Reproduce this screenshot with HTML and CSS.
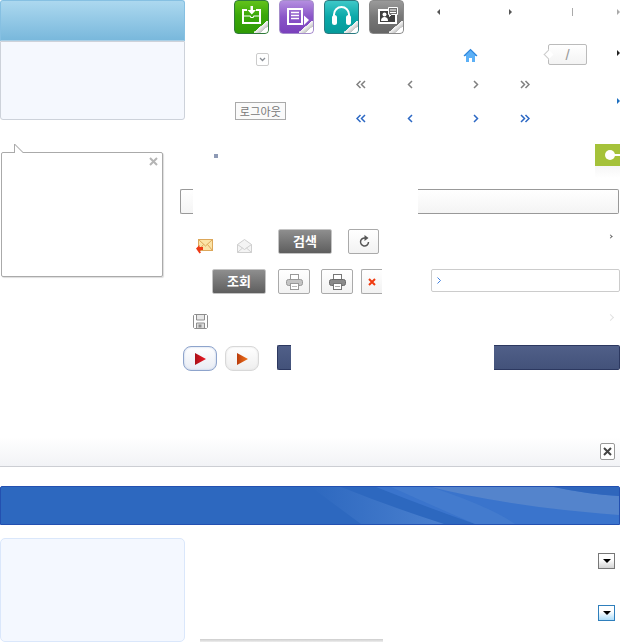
FILE: index.html
```html
<!DOCTYPE html>
<html lang="ko">
<head>
    <meta charset="UTF-8">
    <title>Sprite</title>
    <link rel="stylesheet" href="styles.css">
</head>
<body>
<div id="sheet">
    <div class="panel-head"></div>
    <div class="panel-body"></div>

    <!-- app icons -->
    <div class="app app-green">
        <svg width="27" height="24" viewBox="0 0 27 24"><path d="M9 5H5v13h17V5h-4" fill="none" stroke="#fff" stroke-width="2"/><path d="M5 11h7l1 1.500h2l1-1.500h6" fill="none" stroke="#fff" stroke-width="1.200"/><path d="M12.500 1h2.500v4h3l-4.200 4.500L9.500 5h3z" fill="#fff"/></svg>
        <i class="curl"></i>
    </div>
    <div class="app app-purple">
        <svg width="27" height="26" viewBox="0 0 27 26"><path d="M5 4h14v15H5z" fill="none" stroke="#fff" stroke-width="2"/><path d="M8 7.500h8M8 10.500h8M8 13.500h8" stroke="#fff" stroke-width="1.400"/><path d="M21 10.500l5 4.500-5 5z" fill="#fff"/></svg>
        <i class="curl"></i>
    </div>
    <div class="app app-teal">
        <svg width="27" height="26" viewBox="0 0 27 26"><path d="M6 11V9.500a7.500 7.500 0 0 1 15 0V11" fill="none" stroke="#fff" stroke-width="2"/><rect x="4" y="10" width="5" height="10" rx="2.500" fill="#fff"/><rect x="18" y="10" width="5" height="10" rx="2.500" fill="#fff"/></svg>
        <i class="curl"></i>
    </div>
    <div class="app app-gray">
        <svg width="29" height="26" viewBox="0 0 29 26"><rect x="6" y="4" width="19" height="15" fill="#fff"/><rect x="8" y="6" width="15" height="11" fill="#3f3f3f"/><circle cx="12.500" cy="9.500" r="2" fill="#fff"/><path d="M9 16c0-3 1.500-4 3.500-4s3.500 1 3.500 4z" fill="#fff"/><path d="M16.500 2.500h9v7h-6l-2 2v-2h-1z" fill="#707070" stroke="#fff"/><path d="M18 5h6M18 7.500h6" stroke="#fff"/></svg>
        <i class="curl"></i>
    </div>

    <i class="tri tri-l t1"></i>
    <i class="tri tri-r t2"></i>
    <i class="divider"></i>
    <i class="tri tri-r t3"></i>

    <div class="select-arrow">
        <svg width="7" height="5" viewBox="0 0 7 5"><path d="M1 1l2.500 2.500L6 1" fill="none" stroke="#8a8f96" stroke-width="1.300"/></svg>
    </div>
    <div class="btn-logout">로그아웃</div>

    <svg class="home" width="15" height="15" viewBox="0 0 15 15"><path d="M7.500 1.500L1 8h2v6h3v-4h3v4h3V8h2z" fill="#5cb0f6"/><path d="M1 8l6.500-6.500L14 8" fill="none" stroke="#2f86dc" stroke-width="1.200"/></svg>

    <div class="page-tip"><span class="tip-tail"></span><span class="tip-text">/</span></div>
    <i class="tri tri-r t4"></i>
    <i class="tri tri-r t5"></i>

    <!-- pager -->
    <svg class="pg pg-a1" width="10" height="9" viewBox="0 0 10 9"><path d="M4.500 1L1 4.500 4.500 8M9 1L5.500 4.500 9 8" fill="none" stroke="#808080" stroke-width="1.500"/></svg>
    <svg class="pg pg-a2" width="6" height="9" viewBox="0 0 6 9"><path d="M5 1L1.500 4.500 5 8" fill="none" stroke="#808080" stroke-width="1.500"/></svg>
    <svg class="pg pg-a3" width="6" height="9" viewBox="0 0 6 9"><path d="M1 1l3.500 3.500L1 8" fill="none" stroke="#808080" stroke-width="1.500"/></svg>
    <svg class="pg pg-a4" width="10" height="9" viewBox="0 0 10 9"><path d="M1 1l3.500 3.500L1 8M5.500 1L9 4.500 5.500 8" fill="none" stroke="#808080" stroke-width="1.500"/></svg>
    <svg class="pg pg-b1" width="10" height="9" viewBox="0 0 10 9"><path d="M4.500 1L1 4.500 4.500 8M9 1L5.500 4.500 9 8" fill="none" stroke="#2c68c4" stroke-width="1.500"/></svg>
    <svg class="pg pg-b2" width="6" height="9" viewBox="0 0 6 9"><path d="M5 1L1.500 4.500 5 8" fill="none" stroke="#2c68c4" stroke-width="1.500"/></svg>
    <svg class="pg pg-b3" width="6" height="9" viewBox="0 0 6 9"><path d="M1 1l3.500 3.500L1 8" fill="none" stroke="#2c68c4" stroke-width="1.500"/></svg>
    <svg class="pg pg-b4" width="10" height="9" viewBox="0 0 10 9"><path d="M1 1l3.500 3.500L1 8M5.500 1L9 4.500 5.500 8" fill="none" stroke="#2c68c4" stroke-width="1.500"/></svg>

    <!-- balloon -->
    <div class="balloon">
        <span class="balloon-tail"></span>
        <svg class="balloon-close" width="9" height="9" viewBox="0 0 9 9"><path d="M1 1l7 7M8 1L1 8" stroke="#b5b5b5" stroke-width="2"/></svg>
    </div>

    <i class="bullet"></i>

    <div class="tab-green"><i class="tab-dot"></i><i class="tab-line"></i></div>
    <div class="tab-shadow"></div>

    <div class="input-l"></div>
    <div class="input-r"></div>

    <!-- mail -->
    <svg class="mail-new" width="18" height="16" viewBox="0 0 18 16"><rect x="2.500" y="1.500" width="14" height="11" fill="#fbe3a6" stroke="#dca75a"/><path d="M2.500 1.500L9.500 8l7-6.500M2.500 12.500L7.500 6.500M16.500 12.500l-5-6" fill="none" stroke="#dca75a"/><path d="M0 10.500L3.500 7v2h3.500v3H5l-1 1 1 1.500-1.500 1z" fill="#ee3a16"/></svg>
    <svg class="mail-open" width="15" height="14" viewBox="0 0 15 14"><path d="M.5 5.500L7.500.5l7 5v8H.5z" fill="#f4f4f4" stroke="#cfcfcf"/><path d="M.5 5.500l7 5 7-5M.5 13.500l5-4.500M14.500 13.500l-5-4.500" fill="none" stroke="#cfcfcf"/></svg>

    <div class="btn-dark btn-search">검색</div>
    <div class="btn-light btn-refresh">
        <svg width="12" height="13" viewBox="0 0 12 13"><path d="M8.500 3.500a4 4 0 1 0 2 3.500" fill="none" stroke="#555" stroke-width="1.500"/><path d="M6.500 0v6l4-3z" fill="#555"/></svg>
    </div>
    <i class="chev-small"></i>

    <div class="btn-dark btn-view">조회</div>
    <div class="btn-light btn-print1">
        <svg width="17" height="16" viewBox="0 0 17 16"><rect x="4.500" y=".5" width="8" height="5" fill="#fff" stroke="#999"/><rect x=".5" y="5.500" width="16" height="6" rx="2" fill="#c4c4c4" stroke="#999"/><rect x="4.500" y="9.500" width="8" height="6" fill="#fff" stroke="#999"/><path d="M6 12.500h5" stroke="#bbb"/></svg>
    </div>
    <div class="btn-light btn-print2">
        <svg width="17" height="16" viewBox="0 0 17 16"><rect x="4.500" y=".5" width="8" height="5" fill="#fff" stroke="#777"/><rect x=".5" y="5.500" width="16" height="6" rx="2" fill="#8a8a8a" stroke="#6a6a6a"/><rect x="4.500" y="9.500" width="8" height="6" fill="#fff" stroke="#777"/><path d="M6 12.500h5" stroke="#aaa"/></svg>
    </div>
    <div class="btn-light btn-del">
        <svg width="8" height="8" viewBox="0 0 8 8"><path d="M1 1l6 6M7 1L1 7" stroke="#f03a10" stroke-width="2"/></svg>
    </div>
    <div class="link-box">
        <svg width="4" height="7" viewBox="0 0 4 7"><path d="M.5.500l3 3-3 3" fill="none" stroke="#3d7fe0"/></svg>
    </div>

    <svg class="save" width="15" height="15" viewBox="0 0 15 15"><path d="M1.500.5h12l1 1v12l-1 1h-12l-1-1v-12z" fill="#fff" stroke="#8e8e8e"/><path d="M3.500 1v5h8V1" fill="#e8e8e8" stroke="#8e8e8e"/><path d="M3.500 14v-5h8v5" fill="#ddd" stroke="#8e8e8e"/><path d="M5.500 10.500h3v3h-3z" fill="#8e8e8e"/></svg>
    <i class="chev-faint"></i>

    <!-- play -->
    <div class="play play-on"><svg width="11" height="12" viewBox="0 0 11 12"><defs><linearGradient id="pr" x1="0" x2="1"><stop offset="0" stop-color="#a91018"/><stop offset="1" stop-color="#ee1a24"/></linearGradient></defs><path d="M0 0l11 6L0 12z" fill="url(#pr)"/></svg></div>
    <div class="play play-off"><svg width="11" height="12" viewBox="0 0 11 12"><defs><linearGradient id="po" x1="0" x2="1"><stop offset="0" stop-color="#b93c0c"/><stop offset="1" stop-color="#f2741a"/></linearGradient></defs><path d="M0 0l11 6L0 12z" fill="url(#po)"/></svg></div>

    <div class="navy-l"></div>
    <div class="navy-r"></div>

    <div class="close-bar"></div>
    <div class="btn-close">
        <svg width="9" height="9" viewBox="0 0 9 9"><path d="M1 1l7 7M8 1L1 8" stroke="#444" stroke-width="2"/></svg>
    </div>

    <div class="blue-bar">
        <svg width="618" height="37" viewBox="0 0 618 37">
            <defs><linearGradient id="wave" x1="0" x2="1"><stop offset="0" stop-color="#2d68bf"/><stop offset="1" stop-color="#4a80cf"/></linearGradient></defs>
            <path d="M310 0h30q50 20 103 37H360z" fill="url(#wave)"/>
            <path d="M375 0h243v37H474Q425 20 375 0z" fill="#3a74cc"/>
            <path d="M390 0h40q60 20 84 37h-40Q430 18 390 0z" fill="#4a80cf" opacity=".6"/>
            <path d="M430 0h123q32 7 65 9v19Q510 20 430 0z" fill="#5484cc"/>
            <path d="M553 0h65v9q-33-2-65-9z" fill="#2f66bc"/>
        </svg>
    </div>

    <div class="panel-low"></div>

    <div class="drop drop-gray"><i class="drop-tri"></i></div>
    <div class="drop drop-blue"><i class="drop-tri"></i></div>

    <div class="strip"></div>
</div>
</body>
</html>
```

FILE: styles.css
```css
*{
    margin:0;
    padding:0;
    box-sizing:border-box;
}
html,body{
    background:#fff;
    overflow:hidden;
}
/* sprite sheet: every piece has its own place on the canvas */
#sheet{
    position:relative;
    width:620px;
    height:642px;
    font-family:"Noto Sans CJK KR","Liberation Sans",sans-serif;
    overflow:hidden;
}
#sheet > *{
    position:absolute;
}
i{
    display:block;
}

.panel-head{
    left:0;
    top:0;
    width:185px;
    height:41px;
    background:linear-gradient(#acd8ef,#79b8dc);
    border:1px solid #86c0e2;
    border-bottom:1px solid #a9cfe6;
    border-radius:3px 3px 0 0;
}
.panel-body{
    left:0;
    top:41px;
    width:185px;
    height:79px;
    background:#f5f8fe;
    border:1px solid #cdd2da;
    border-radius:0 0 3px 3px;
}

.app{
    top:0;
    width:35px;
    height:34px;
    border-radius:4px;
    display:flex;
    justify-content:center;
    padding-top:4px;
    overflow:hidden;
}
.app svg{
    flex:none;
}
.app-green{
    left:234px;
    background:linear-gradient(#62c21a 0,#3aa80a 45%,#2f9a04 100%);
    border:1px solid #2f7a3a;
}
.app-purple{
    left:279px;
    background:linear-gradient(#b48ee0 0,#8a55c8 50%,#7a40bc 100%);
    border:1px solid #a48ccb;
}
.app-teal{
    left:324px;
    background:linear-gradient(#3ec8c8 0,#0aa8a8 50%,#059a9a 100%);
    border:1px solid #2a7a80;
}
.app-gray{
    left:369px;
    background:linear-gradient(#9a9a9a 0,#777 50%,#666 100%);
    border:1px solid #8a8a8a;
}
.curl{
    position:absolute;
    right:-1px;
    bottom:-1px;
    width:15px;
    height:13px;
    background:linear-gradient(140deg,transparent 42%,#f6f6f6 43%,#c4c4c4 66%,#fff 67%);
}

.tri{
    width:0;
    height:0;
    border-style:solid;
}
.tri-l{
    border-width:3px 3px 3px 0;
    border-color:transparent #555 transparent transparent;
}
.tri-r{
    border-width:3px 0 3px 3px;
    border-color:transparent transparent transparent #555;
}
.t1{
    left:437px;
    top:9px;
}
.t2{
    left:509px;
    top:9px;
}
.t3{
    left:617px;
    top:9px;
    border-left-color:#aaa;
}
.t4{
    left:617px;
    top:50px;
    border-left-color:#222;
}
.t5{
    left:617px;
    top:98px;
    border-left-color:#1d6fc0;
}
.divider{
    left:572px;
    top:8px;
    width:1px;
    height:8px;
    background:#aaa;
}

.select-arrow{
    left:256px;
    top:53px;
    width:13px;
    height:13px;
    border:1px solid #ccc;
    border-radius:2px;
    display:flex;
    align-items:center;
    justify-content:center;
}
.btn-logout{
    left:235px;
    top:102px;
    width:51px;
    height:18px;
    border:1px solid #aaa;
    background:#fafafa;
    color:#777;
    font-size:11px;
    letter-spacing:.2px;
    line-height:16px;
    text-align:center;
}
.home{
    left:463px;
    top:48px;
}

.page-tip{
    left:548px;
    top:44px;
    width:39px;
    height:21px;
    border:1px solid #bbb;
    border-radius:2px;
    background:linear-gradient(#fff,#f3f3f3);
    display:flex;
    align-items:center;
    justify-content:center;
}
.tip-tail{
    position:absolute;
    left:-4px;
    top:6px;
    width:7px;
    height:7px;
    background:#fff;
    border-left:1px solid #ccc;
    border-bottom:1px solid #ccc;
    transform:rotate(45deg);
}
.tip-text{
    font-family:"Liberation Sans",sans-serif;
    font-size:15px;
    color:#999;
}

.pg-a1,.pg-a2,.pg-a3,.pg-a4{
    top:80px;
}
.pg-b1,.pg-b2,.pg-b3,.pg-b4{
    top:114px;
}
.pg-a1,.pg-b1{
    left:356px;
}
.pg-a2,.pg-b2{
    left:407px;
}
.pg-a3,.pg-b3{
    left:473px;
}
.pg-a4,.pg-b4{
    left:520px;
}

.balloon{
    left:1px;
    top:152px;
    width:162px;
    height:125px;
    background:#fff;
    border:1px solid #aaa;
    border-radius:2px;
    box-shadow:1px 1px 1px #ddd;
}
.balloon-tail{
    position:absolute;
    left:12px;
    top:-9px;
    width:9px;
    height:9px;
    background:linear-gradient(to top right,#fff 50%,transparent 50%);
    border-left:1px solid #aaa;
}
.balloon-tail::after{
    content:"";
    position:absolute;
    left:-2px;
    top:4px;
    width:12px;
    height:1px;
    background:#aaa;
    transform:rotate(45deg);
}
.balloon-close{
    position:absolute;
    right:4px;
    top:4px;
}
.bullet{
    left:214px;
    top:154px;
    width:4px;
    height:4px;
    background:#8e9ab5;
}

.tab-green{
    left:595px;
    top:144px;
    width:25px;
    height:22px;
    background:#a5c23a;
}
.tab-dot{
    position:absolute;
    left:10px;
    top:6px;
    width:10px;
    height:10px;
    border-radius:50%;
    background:#fff;
}
.tab-line{
    position:absolute;
    left:18px;
    top:10px;
    width:7px;
    height:2px;
    background:#fff;
}
.tab-shadow{
    left:595px;
    top:166px;
    width:25px;
    height:12px;
    background:linear-gradient(#f6f6f6,#fff);
}

.input-l,.input-r{
    top:189px;
    height:25px;
    background:linear-gradient(#fff,#f4f4f4);
    border:1px solid #999;
}
.input-l{
    left:180px;
    width:13px;
    border-right:0;
    border-radius:2px 0 0 2px;
}
.input-r{
    left:418px;
    width:201px;
    border-left:0;
    border-radius:0 2px 2px 0;
}

.mail-new{
    left:196px;
    top:238px;
}
.mail-open{
    left:237px;
    top:239px;
}

.btn-dark{
    width:54px;
    height:25px;
    background:linear-gradient(#8e8e8e,#5e5e5e);
    border:1px solid #c4c4c4;
    border-radius:2px;
    color:#fff;
    font-size:13px;
    font-weight:700;
    line-height:22px;
    text-align:center;
}
.btn-search{
    left:278px;
    top:229px;
}
.btn-view{
    left:212px;
    top:269px;
}
.btn-light{
    height:25px;
    background:linear-gradient(#fff,#f2f2f2);
    border:1px solid #aaa;
    border-radius:2px;
    display:flex;
    align-items:center;
    justify-content:center;
}
.btn-refresh{
    left:348px;
    top:229px;
    width:31px;
}
.btn-print1{
    left:278px;
    top:269px;
    width:32px;
}
.btn-print2{
    left:321px;
    top:269px;
    width:32px;
}
.btn-del{
    left:361px;
    top:269px;
    width:21px;
    border-right:0;
    border-radius:2px 0 0 2px;
}
.chev-small,.chev-faint{
    width:3px;
    height:3px;
    border-top:1px solid #666;
    border-right:1px solid #666;
    transform:rotate(45deg);
}
.chev-small{
    left:609px;
    top:235px;
}
.chev-faint{
    left:608px;
    top:315px;
    width:5px;
    height:5px;
    border-color:#e2e2e2;
}
.link-box{
    left:431px;
    top:269px;
    width:189px;
    height:23px;
    border:1px solid #ccc;
    border-radius:2px;
    padding:7px 0 0 5px;
    display:flex;
    align-items:flex-start;
}
.save{
    left:193px;
    top:314px;
}

.play{
    top:346px;
    width:34px;
    height:25px;
    border-radius:8px;
    display:flex;
    align-items:center;
    justify-content:center;
}
.play-on{
    left:183px;
    border:1px solid #8ea4cc;
    background:linear-gradient(#fff,#e8ecf4);
    box-shadow:inset 0 0 2px #b4c4e0;
}
.play-off{
    left:225px;
    border:1px solid #d8d8d8;
    background:linear-gradient(#fff,#eee);
    box-shadow:inset 0 0 2px #ddd;
}

.navy-l,.navy-r{
    top:345px;
    height:25px;
    background:linear-gradient(#505f88,#43527a);
    border:1px solid #2c3860;
}
.navy-l{
    left:277px;
    width:14px;
    border-right:0;
    border-radius:2px 0 0 2px;
}
.navy-r{
    left:494px;
    width:126px;
    border-left:0;
    border-radius:0 2px 2px 0;
}

.close-bar{
    left:0;
    top:437px;
    width:620px;
    height:30px;
    background:linear-gradient(#fff,#f2f3f6);
    border-bottom:1px solid #ccced3;
}
.btn-close{
    left:600px;
    top:443px;
    width:15px;
    height:17px;
    background:#fff;
    border:1px solid #999;
    border-radius:2px;
    display:flex;
    align-items:center;
    justify-content:center;
}

.blue-bar{
    left:0;
    top:486px;
    width:620px;
    height:39px;
    background:#2d68bf;
    border:1px solid #2350b0;
    border-radius:2px 2px 0 0;
    overflow:hidden;
}
.blue-bar svg{
    display:block;
}

.panel-low{
    left:0;
    top:538px;
    width:185px;
    height:104px;
    background:#f4f8ff;
    border:1px solid #dae7fb;
    border-radius:5px;
}

.drop{
    left:598px;
    width:17px;
    height:16px;
    border:1px solid #777;
    display:flex;
    align-items:center;
    justify-content:center;
}
.drop-gray{
    top:553px;
    background:linear-gradient(#fff 40%,#d4d4d4);
}
.drop-blue{
    top:605px;
    border-color:#2f7fbc;
    background:linear-gradient(#fff 40%,#addcf8);
}
.drop-tri{
    width:0;
    height:0;
    border-style:solid;
    border-width:4px 4px 0 4px;
    border-color:#000 transparent transparent transparent;
}
.strip{
    left:200px;
    top:639px;
    width:183px;
    height:3px;
    background:linear-gradient(#ccc,#eee);
}
```
